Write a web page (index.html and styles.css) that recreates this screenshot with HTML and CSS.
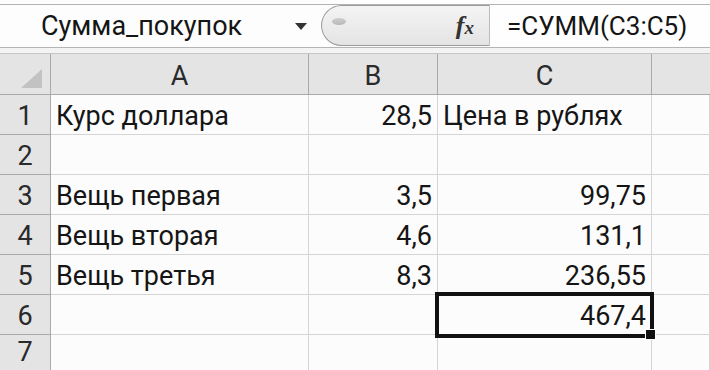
FILE: index.html
```html
<!DOCTYPE html>
<html lang="ru">
<head>
  <meta charset="UTF-8">
  <title>Сумма покупок</title>
  <link rel="stylesheet" href="styles.css">
</head>
<body>

  <div class="formula-bar">
    <div class="name-box">
      <span class="name">Сумма_покупок</span>
      <span class="arrow"></span>
    </div>
    <div class="fx-zone">
      <span class="grip"></span>
      <span class="fx">f<small>x</small></span>
    </div>
    <div class="formula">=СУММ(C3:C5)</div>
  </div>
  <div class="divider"></div>

  <div class="sheet">
    <div class="head corner"><span class="tri"></span></div>
    <div class="head col">A</div>
    <div class="head col">B</div>
    <div class="head col">C</div>
    <div class="head col last"></div>

    <div class="head row">1</div>
    <div class="cell">Курс доллара</div>
    <div class="cell num">28,5</div>
    <div class="cell">Цена в рублях</div>
    <div class="cell"></div>

    <div class="head row">2</div>
    <div class="cell"></div>
    <div class="cell"></div>
    <div class="cell"></div>
    <div class="cell"></div>

    <div class="head row">3</div>
    <div class="cell">Вещь первая</div>
    <div class="cell num">3,5</div>
    <div class="cell num">99,75</div>
    <div class="cell"></div>

    <div class="head row">4</div>
    <div class="cell">Вещь вторая</div>
    <div class="cell num">4,6</div>
    <div class="cell num">131,1</div>
    <div class="cell"></div>

    <div class="head row">5</div>
    <div class="cell">Вещь третья</div>
    <div class="cell num">8,3</div>
    <div class="cell num">236,55</div>
    <div class="cell"></div>

    <div class="head row">6</div>
    <div class="cell"></div>
    <div class="cell"></div>
    <div class="cell num active">467,4</div>
    <div class="cell"></div>

    <div class="head row end">7</div>
    <div class="cell end"></div>
    <div class="cell end"></div>
    <div class="cell end"></div>
    <div class="cell end"></div>
  </div>

</body>
</html>
```
FILE: styles.css
```css
body {
  margin: 0;
  padding: 0;
  background: #fdfdfd;
  font-family: Roboto, 'Noto Sans', sans-serif;
  color: #151515;
  overflow: hidden;
}
.formula-bar {
  display: flex;
  height: 42px;
  margin-top: 4px;
  border-top: 1px solid #b4b4b4;
  border-bottom: 1px solid #b4b4b4;
  background: #fdfdfd;
}
.name-box {
  width: 321px;
  display: flex;
  align-items: center;
  font-size: 27px;
}
.name {
  margin-left: 41px;
}
.arrow {
  margin-left: auto;
  margin-right: 14px;
  width: 0;
  height: 0;
  border-left: 6px solid transparent;
  border-right: 6px solid transparent;
  border-top: 7px solid #333;
}
.fx-zone {
  width: 167px;
  display: flex;
  align-items: center;
  background: linear-gradient(#f4f4f4, #e4e4e4);
  border: 1px solid #9a9a9a;
  border-right: 1px solid #bdbdbd;
  border-radius: 21px 0 0 21px;
  margin: 0 0 1px 0;
}
.grip {
  width: 14px;
  height: 7px;
  margin-left: 10px;
  margin-bottom: 8px;
  border-radius: 50%;
  background: linear-gradient(#cfcfcf, #b8b8b8);
}
.fx {
  margin-left: auto;
  margin-right: 15px;
  font-family: 'Liberation Serif', serif;
  font-style: italic;
  font-weight: bold;
  font-size: 26px;
  color: #333;
}
.fx small {
  font-size: 19px;
}
.formula {
  flex: 1;
  display: flex;
  align-items: center;
  padding-left: 17px;
  font-size: 26px;
  background: #fefefe;
}
.divider {
  height: 5px;
  background: #f3f3f3;
  border-bottom: 1px solid #c6c6c6;
}
.sheet {
  display: grid;
  grid-template-columns: 51px 258px 129px 214px 1fr;
  grid-template-rows: 41px repeat(6, 40px) 35px;
  font-size: 27px;
}
.head,
.cell {
  display: flex;
  align-items: flex-end;
  padding-bottom: 4px;
  line-height: 27px;
  box-sizing: border-box;
  white-space: nowrap;
}
.head {
  background: #e4e4e4;
  justify-content: center;
  color: #2a2a2a;
  border-right: 1px solid #a9a9a9;
  border-bottom: 1px solid #a9a9a9;
}
.head.last {
  border-right: none;
}
.corner {
  justify-content: flex-end;
  padding: 0 8px 6px 0;
}
.tri {
  width: 0;
  height: 0;
  border-left: 21px solid transparent;
  border-bottom: 19px solid #c2c2c2;
}
.cell {
  padding-left: 5px;
  padding-right: 5px;
  border-right: 1px solid #d5d5d5;
  border-bottom: 1px solid #d5d5d5;
  background: #fcfcfc;
}
.head.end,
.cell.end {
  border-bottom: none;
  padding-bottom: 4px;
}
.num {
  justify-content: flex-end;
}
.active {
  position: relative;
}
.active::after {
  content: "";
  position: absolute;
  left: -3px;
  top: -3px;
  right: -3px;
  bottom: -4px;
  border: 4px solid #111;
}
.active::before {
  content: "";
  position: absolute;
  right: -5px;
  bottom: -6px;
  width: 9px;
  height: 9px;
  background: #111;
  border: 1px solid #fff;
  z-index: 1;
}
```
